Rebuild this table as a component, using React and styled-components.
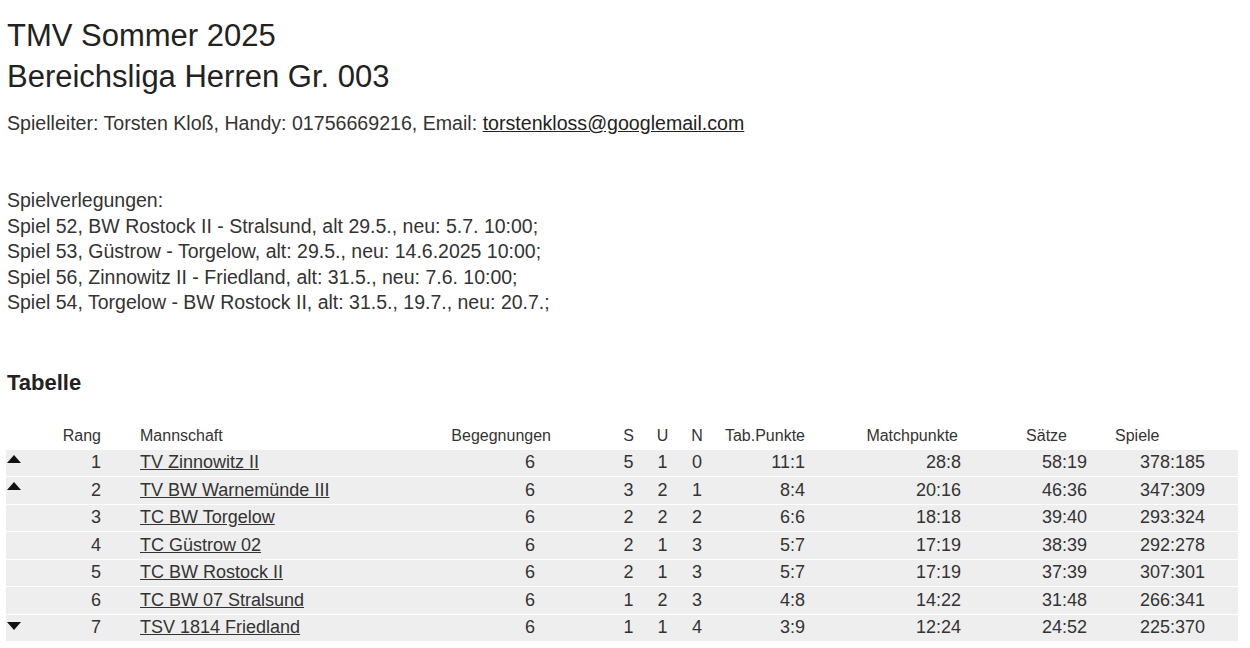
import React from "react";
import styled, { createGlobalStyle } from "styled-components";

// league table page: header texts, schedule changes, standings

const GlobalStyle = createGlobalStyle`
  html, body {
    margin: 0;
    padding: 0;
    background: #ffffff;
  }
  body {
    font-family: "Liberation Sans", Arial, sans-serif;
    color: #333333;
  }
`;

const cols = [
  { key: "trend", label: "", hAlign: "left", hPad: [1, 0], dAlign: "left", dPad: [1, 0] },
  { key: "rang", label: "Rang", hAlign: "right", hPad: [0, 9], dAlign: "right", dPad: [0, 9] },
  { key: "team", label: "Mannschaft", hAlign: "left", hPad: [30, 0], dAlign: "left", dPad: [30, 0] },
  { key: "beg", label: "Begegnungen", hAlign: "right", hPad: [0, 61], dAlign: "right", dPad: [0, 77] },
  { key: "s", label: "S", hAlign: "center", hPad: [0, 0], dAlign: "center", dPad: [0, 0] },
  { key: "u", label: "U", hAlign: "center", hPad: [0, 0], dAlign: "center", dPad: [0, 0] },
  { key: "n", label: "N", hAlign: "center", hPad: [0, 0], dAlign: "center", dPad: [0, 0] },
  { key: "tab", label: "Tab.Punkte", hAlign: "right", hPad: [0, 10], dAlign: "right", dPad: [0, 10] },
  { key: "mp", label: "Matchpunkte", hAlign: "right", hPad: [0, 12], dAlign: "right", dPad: [0, 9] },
  { key: "saetze", label: "Sätze", hAlign: "right", hPad: [0, 28], dAlign: "right", dPad: [0, 8] },
  { key: "spiele", label: "Spiele", hAlign: "left", hPad: [20, 0], dAlign: "right", dPad: [0, 33] },
];

const rows = [
  { trend: "up", rang: 1, team: "TV Zinnowitz II", beg: 6, s: 5, u: 1, n: 0, tab: "11:1", mp: "28:8", saetze: "58:19", spiele: "378:185" },
  { trend: "up", rang: 2, team: "TV BW Warnemünde III", beg: 6, s: 3, u: 2, n: 1, tab: "8:4", mp: "20:16", saetze: "46:36", spiele: "347:309" },
  { trend: "", rang: 3, team: "TC BW Torgelow", beg: 6, s: 2, u: 2, n: 2, tab: "6:6", mp: "18:18", saetze: "39:40", spiele: "293:324" },
  { trend: "", rang: 4, team: "TC Güstrow 02", beg: 6, s: 2, u: 1, n: 3, tab: "5:7", mp: "17:19", saetze: "38:39", spiele: "292:278" },
  { trend: "", rang: 5, team: "TC BW Rostock II", beg: 6, s: 2, u: 1, n: 3, tab: "5:7", mp: "17:19", saetze: "37:39", spiele: "307:301" },
  { trend: "", rang: 6, team: "TC BW 07 Stralsund", beg: 6, s: 1, u: 2, n: 3, tab: "4:8", mp: "14:22", saetze: "31:48", spiele: "266:341" },
  { trend: "down", rang: 7, team: "TSV 1814 Friedland", beg: 6, s: 1, u: 1, n: 4, tab: "3:9", mp: "12:24", saetze: "24:52", spiele: "225:370" },
];

const changes = [
  "Spiel 52, BW Rostock II - Stralsund, alt 29.5., neu: 5.7. 10:00;",
  "Spiel 53, Güstrow - Torgelow, alt: 29.5., neu: 14.6.2025 10:00;",
  "Spiel 56, Zinnowitz II - Friedland, alt: 31.5., neu: 7.6. 10:00;",
  "Spiel 54, Torgelow - BW Rostock II, alt: 31.5., 19.7., neu: 20.7.;",
];

function Trend({ dir }) {
  if (!dir) return null;
  return (
    <TrendIcon width="14" height="8" viewBox="0 0 14 8" $dir={dir}>
      {dir === "up" ? <polygon points="7,0 14,8 0,8" /> : <polygon points="0,0 14,0 7,8" />}
    </TrendIcon>
  );
}

export default function App() {
  return (
    <Page>
      <GlobalStyle />
      <Title>TMV Sommer 2025</Title>
      <Title>Bereichsliga Herren Gr. 003</Title>
      <Contact>
        Spielleiter: Torsten Kloß, Handy: 01756669216, Email:{" "}
        <MailLink href="#">torstenkloss@googlemail.com</MailLink>
      </Contact>

      <Notes>
        <div>Spielverlegungen:</div>
        {changes.map((c) => (
          <div key={c}>{c}</div>
        ))}
      </Notes>

      <SectionTitle>Tabelle</SectionTitle>

      <Table>
        <HeadRow>
          {cols.map((c) => (
            <Cell key={c.key} $align={c.hAlign} $pl={c.hPad[0]} $pr={c.hPad[1]}>
              {c.label}
            </Cell>
          ))}
        </HeadRow>
        {rows.map((r) => (
          <BodyRow key={r.rang}>
            {cols.map((c) => (
              <Cell key={c.key} $align={c.dAlign} $pl={c.dPad[0]} $pr={c.dPad[1]}>
                {c.key === "trend" ? (
                  <Trend dir={r.trend} />
                ) : c.key === "team" ? (
                  <TeamLink href="#">{r.team}</TeamLink>
                ) : (
                  r[c.key]
                )}
              </Cell>
            ))}
          </BodyRow>
        ))}
      </Table>
    </Page>
  );
}

const Page = styled.div`
  padding: 15px 12px 0 7px;
`;

const Title = styled.div`
  font-size: 31px;
  line-height: 41px;
  color: #222222;
`;

const Contact = styled.div`
  margin-top: 14px;
  font-size: 19.6px;
  line-height: 25px;
`;

const MailLink = styled.a`
  color: #222222;
  text-decoration: underline;
`;

const Notes = styled.div`
  margin-top: 52px;
  font-size: 19.5px;
  line-height: 25.5px;
`;

const SectionTitle = styled.div`
  margin-top: 54px;
  font-size: 22px;
  line-height: 26px;
  font-weight: bold;
  color: #222222;
`;

const Table = styled.div`
  margin: 28px 0 0 -1px;
  display: grid;
  grid-template-columns: 34px 70px 310px 192px 33px 35px 34px 101px 155px 125px 143px;
  row-gap: 1px;
  width: 1232px;
`;

const HeadRow = styled.div`
  display: contents;
  font-size: 16px;
  & > div {
    height: 25px;
  }
`;

const BodyRow = styled.div`
  display: contents;
  font-size: 18px;
  & > div {
    height: 26.5px;
    background: #eeeeee;
  }
`;

const Cell = styled.div`
  display: flex;
  align-items: center;
  justify-content: ${(p) =>
    p.$align === "right" ? "flex-end" : p.$align === "center" ? "center" : "flex-start"};
  padding-left: ${(p) => p.$pl}px;
  padding-right: ${(p) => p.$pr}px;
  white-space: nowrap;
  box-sizing: border-box;
`;

const TeamLink = styled.a`
  color: #333333;
  text-decoration: underline;
`;

const TrendIcon = styled.svg`
  display: block;
  fill: #111111;
  margin-top: ${(p) => (p.$dir === "up" ? "-8px" : "-3px")};
`;
